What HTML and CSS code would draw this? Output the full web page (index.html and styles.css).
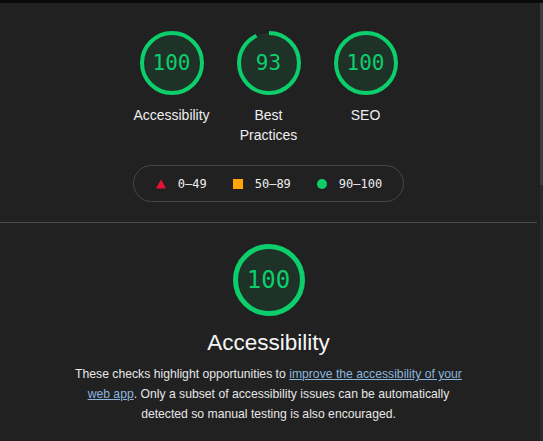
FILE: index.html
```
<!DOCTYPE html>
<html lang="en">
<head>
<meta charset="utf-8">
<title>Lighthouse Report</title>
<link rel="stylesheet" href="styles.css">
</head>
<body>
<div class="frame">
  <div class="topbar"></div>
  <div class="body-row">
    <main class="report">
      <section class="summary">
        <div class="gauges">
          <div class="gauge">
            <div class="gauge-ring">
              <svg viewBox="0 0 64 64" width="64" height="64">
                <circle class="base" cx="32" cy="32" r="30"/>
                <circle class="arc" cx="32" cy="32" r="30" stroke-dasharray="188.5 188.5" transform="rotate(-90 32 32)"/>
              </svg>
              <span class="gauge-num">100</span>
            </div>
            <div class="gauge-label">Accessibility</div>
          </div>
          <div class="gauge">
            <div class="gauge-ring">
              <svg viewBox="0 0 64 64" width="64" height="64">
                <circle class="base" cx="32" cy="32" r="30"/>
                <circle class="arc" cx="32" cy="32" r="30" stroke-dasharray="175.3 188.5" transform="rotate(-90 32 32)"/>
              </svg>
              <span class="gauge-num">93</span>
            </div>
            <div class="gauge-label">Best<br>Practices</div>
          </div>
          <div class="gauge">
            <div class="gauge-ring">
              <svg viewBox="0 0 64 64" width="64" height="64">
                <circle class="base" cx="32" cy="32" r="30"/>
                <circle class="arc" cx="32" cy="32" r="30" stroke-dasharray="188.5 188.5" transform="rotate(-90 32 32)"/>
              </svg>
              <span class="gauge-num">100</span>
            </div>
            <div class="gauge-label">SEO</div>
          </div>
        </div>
        <div class="legend">
          <span class="legend-item"><svg class="icon" width="10" height="10" viewBox="0 0 10 10"><polygon points="5,0.5 10,9.5 0,9.5" fill="#ea1133"/></svg><span class="range">0–49</span></span>
          <span class="legend-item"><span class="icon sq"></span><span class="range">50–89</span></span>
          <span class="legend-item"><span class="icon dot"></span><span class="range">90–100</span></span>
        </div>
      </section>
      <section class="category">
        <div class="big-ring">
          <svg viewBox="0 0 72 72" width="72" height="72">
            <circle class="base" cx="36" cy="36" r="33.5"/>
            <circle class="arc big" cx="36" cy="36" r="33.5"/>
          </svg>
          <span class="big-num">100</span>
        </div>
        <h2 class="cat-title">Accessibility</h2>
        <p class="cat-desc">These checks highlight opportunities to <a href="#">improve the accessibility of your</a><br><a href="#">web app</a>. Only a subset of accessibility issues can be automatically<br>detected so manual testing is also encouraged.</p>
      </section>
    </main>
    <div class="scrollbar"><div class="thumb"></div></div>
  </div>
</div>
</body>
</html>
```
FILE: styles.css
```
* { box-sizing: border-box; }
html, body { margin: 0; padding: 0; }
body {
  background: #212121;
  color: #eeeeee;
  font-family: "Liberation Sans", Arial, sans-serif;
  width: 543px;
  height: 441px;
  overflow: hidden;
}
.frame { display: flex; flex-direction: column; height: 441px; }
.topbar { height: 3px; background: #0a0a0a; flex: none; }
.body-row { display: flex; flex: 1; }
.report { flex: 1; padding-right: 3px; }
.scrollbar { width: 3px; background: #2a2a2a; display: flex; flex-direction: column; }
.thumb { height: 182px; background: #3c3c3c; }

.summary {
  padding-top: 28px;
  display: flex;
  flex-direction: column;
  align-items: center;
  border-bottom: 1px solid #4d4d4d;
  padding-bottom: 20px;
}
.gauges { display: flex; justify-content: center; }
.gauge { width: 97px; display: flex; flex-direction: column; align-items: center; }
.gauge-ring { position: relative; width: 64px; height: 64px; }
.gauge-ring svg, .big-ring svg { display: block; }
.base { fill: rgba(12, 206, 107, 0.1); stroke: none; }
.arc { fill: none; stroke: #0cce6b; stroke-width: 4; }
.arc.big { stroke-width: 5; }
.gauge-num {
  position: absolute; inset: 0;
  display: flex; align-items: center; justify-content: center;
  font-family: "DejaVu Sans Mono", monospace;
  font-size: 21px;
  color: #0cce6b;
}
.gauge-label {
  margin-top: 10px;
  font-size: 14px;
  line-height: 20px;
  text-align: center;
  color: #eeeeee;
}
.legend {
  margin-top: 20px;
  height: 37px;
  border: 1px solid #474747;
  border-radius: 19px;
  padding: 0 21px 0 22px;
  display: flex;
  align-items: center;
  gap: 26px;
}
.legend-item { display: flex; align-items: center; gap: 12px; }
.icon { display: block; width: 10px; height: 10px; flex: none; }
.sq { background: #ffa400; }
.dot { background: #0cce6b; border-radius: 50%; }
.range {
  font-family: "DejaVu Sans Mono", monospace;
  font-size: 12px;
  color: #eeeeee;
}

.category {
  padding-top: 21px;
  display: flex;
  flex-direction: column;
  align-items: center;
}
.big-ring { position: relative; width: 72px; height: 72px; }
.big-num {
  position: absolute; inset: 0;
  display: flex; align-items: center; justify-content: center;
  font-family: "DejaVu Sans Mono", monospace;
  font-size: 24px;
  color: #0cce6b;
}
.cat-title {
  margin: 13px 0 0;
  font-size: 22.5px;
  font-weight: normal;
  line-height: 28px;
  color: #f5f5f5;
}
.cat-desc {
  margin: 7px 0 0;
  width: 400px;
  font-size: 12.2px;
  line-height: 20px;
  text-align: center;
  color: #e6e6e6;
}
.cat-desc a { color: #8ab6df; text-decoration: underline; }
```
